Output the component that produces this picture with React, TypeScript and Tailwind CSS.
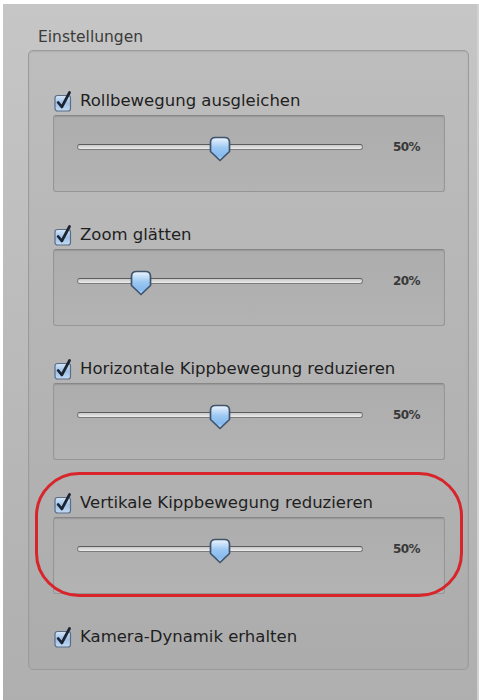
import React from "react";

interface Setting {
  label: string;
  value?: number;
}

const settings: Setting[] = [
  { label: "Rollbewegung ausgleichen", value: 50 },
  { label: "Zoom glätten", value: 20 },
  { label: "Horizontale Kippbewegung reduzieren", value: 50 },
  { label: "Vertikale Kippbewegung reduzieren", value: 50 },
  { label: "Kamera-Dynamik erhalten" },
];

function CheckBox() {
  return (
    <svg width="19" height="21" viewBox="0 0 19 21" className="shrink-0">
      <defs>
        <linearGradient id="cbFill" x1="0" y1="0" x2="0" y2="1">
          <stop offset="0" stopColor="#d6e6f7" />
          <stop offset="0.5" stopColor="#9fc0e6" />
          <stop offset="1" stopColor="#c3d9f2" />
        </linearGradient>
      </defs>
      <rect x="1" y="4.5" width="15.5" height="15.5" rx="2.5" fill="url(#cbFill)" stroke="#5a6d87" strokeWidth="1.2" />
      <path d="M4.2 11.5 L7.8 16 L15.5 1.5" fill="none" stroke="#1b2432" strokeWidth="2.7" strokeLinecap="round" strokeLinejoin="round" />
    </svg>
  );
}

function Thumb() {
  return (
    <svg width="26" height="28" viewBox="0 0 26 28">
      <defs>
        <linearGradient id="thFill" x1="0" y1="0" x2="0" y2="1">
          <stop offset="0" stopColor="#eef5fd" />
          <stop offset="0.45" stopColor="#9cc8f3" />
          <stop offset="0.8" stopColor="#86b9ee" />
          <stop offset="1" stopColor="#c7e1fa" />
        </linearGradient>
      </defs>
      <path d="M3.5 7.5 Q3.5 2.5 8.5 2.5 H17.5 Q22.5 2.5 22.5 7.5 V16.5 L13 25.5 L3.5 16.5 Z" fill="url(#thFill)" stroke="#3f536b" strokeWidth="1.7" strokeLinejoin="round" />
    </svg>
  );
}

function Slider({ value }: { value: number }) {
  // thumb travel: track width minus thumb width
  const left = `calc(${value / 100} * (100% - 22px) + 11px - 13px)`;
  return (
    <div className="flex h-[77px] rounded-[3px] border border-[#969696] border-t-[#878787] bg-gradient-to-b from-[#adadad] to-[#b3b3b3] pl-[23px] pr-[22px] pt-[27px] shadow-[inset_0_1px_1px_rgba(0,0,0,0.12)]">
      <div className="flex h-[8px] w-full items-center">
        <div className="relative h-[6px] flex-1 rounded-full border border-[#7c7c7c] border-t-[#5c5c5c] bg-gradient-to-b from-[#c9c9c9] to-[#ececec]">
          <div className="absolute top-[-10px]" style={{ left }}>
            <Thumb />
          </div>
        </div>
        <span className="ml-[30px] w-[29px] text-[12px] font-bold tracking-[-0.6px] text-[#383838]" style={{ fontFamily: '"DejaVu Sans", Verdana, sans-serif' }}>
          {value}%
        </span>
      </div>
    </div>
  );
}

export default function App() {
  return (
    <div className="relative h-[700px] w-[479px] overflow-hidden bg-white pl-[3px] pt-[4px]" style={{ fontFamily: '"DejaVu Sans", "Lucida Grande", Verdana, sans-serif' }}>
      <div className="h-[696px] border-r-2 border-[#d2d2d2] bg-gradient-to-b from-[#c6c6c6] to-[#afafaf] pl-[25px] pr-[8px] pt-[25px]">
        <div className="ml-[10px] h-[17px] text-[15.5px] leading-[17px] text-[#3b3b3b]">Einstellungen</div>
        <div className="mt-[4px] h-[620px] rounded-[5px] border border-[#9b9b9b] bg-gradient-to-b from-[#bdbdbd] to-[#acacac] pl-[24px] pr-[23px] pt-[37px] shadow-[inset_0_1px_2px_rgba(0,0,0,0.08)]">
          {settings.map((s) => (
            <div key={s.label} className={s.value !== undefined ? "mb-[30px]" : ""}>
              <div className="flex h-[27px] items-center gap-[7px] pl-[1px]">
                <CheckBox />
                <span className="text-[16.5px] leading-none text-[#1f1f1f]">{s.label}</span>
              </div>
              {s.value !== undefined && <Slider value={s.value} />}
            </div>
          ))}
        </div>
      </div>

      {/* red annotation ring */}
      <div className="pointer-events-none absolute left-[35px] top-[472px] h-[125px] w-[428px] rounded-[44px] border-[3px] border-[#d8252b]" />
    </div>
  );
}
